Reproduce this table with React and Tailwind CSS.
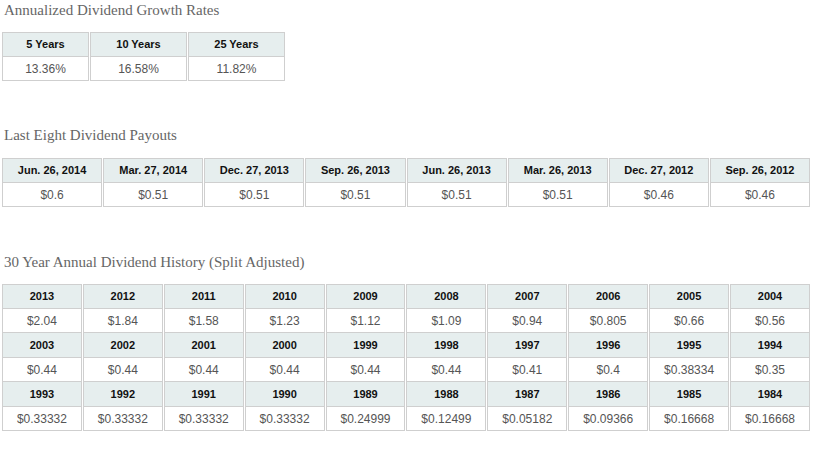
import React from "react";

const growth = [["5 Years", "13.36%"], ["10 Years", "16.58%"], ["25 Years", "11.82%"]];
const payouts = [
  ["Jun. 26, 2014", "$0.6"],
  ["Mar. 27, 2014", "$0.51"],
  ["Dec. 27, 2013", "$0.51"],
  ["Sep. 26, 2013", "$0.51"],
  ["Jun. 26, 2013", "$0.51"],
  ["Mar. 26, 2013", "$0.51"],
  ["Dec. 27, 2012", "$0.46"],
  ["Sep. 26, 2012", "$0.46"],
];
const history = [
  [
    ["2013", "$2.04"], ["2012", "$1.84"], ["2011", "$1.58"], ["2010", "$1.23"], ["2009", "$1.12"],
    ["2008", "$1.09"], ["2007", "$0.94"], ["2006", "$0.805"], ["2005", "$0.66"], ["2004", "$0.56"],
  ],
  [
    ["2003", "$0.44"], ["2002", "$0.44"], ["2001", "$0.44"], ["2000", "$0.44"], ["1999", "$0.44"],
    ["1998", "$0.44"], ["1997", "$0.41"], ["1996", "$0.4"], ["1995", "$0.38334"], ["1994", "$0.35"],
  ],
  [
    ["1993", "$0.33332"], ["1992", "$0.33332"], ["1991", "$0.33332"], ["1990", "$0.33332"], ["1989", "$0.24999"],
    ["1988", "$0.12499"], ["1987", "$0.05182"], ["1986", "$0.09366"], ["1985", "$0.16668"], ["1984", "$0.16668"],
  ],
];

function Heading({ children, className = "" }) {
  return (
    <h2
      className={`text-[15px] leading-[20px] font-normal text-[#666] pl-[4px] ${className}`}
      style={{ fontFamily: '"Liberation Serif", Georgia, serif' }}
    >
      {children}
    </h2>
  );
}

function Rows({ groups, colClasses }) {
  return (
    <tbody>
      {groups.map((g, gi) => (
        <React.Fragment key={gi}>
          <tr>
            {g.map(([h], i) => (
              <th
                key={i}
                className={`h-[25px] p-0 text-center text-[11px] font-bold text-[#111] bg-[#e6eeee] border border-[#cfcfcf] ${gi > 0 ? "border-t-0 h-[24px]" : ""} ${gi === 0 && colClasses ? colClasses[i] : ""}`}
              >
                {h}
              </th>
            ))}
          </tr>
          <tr>
            {g.map(([, v], i) => (
              <td
                key={i}
                className="h-[24px] p-0 text-center text-[12px] text-[#555] bg-white border border-t-0 border-[#cfcfcf]"
              >
                {v}
              </td>
            ))}
          </tr>
        </React.Fragment>
      ))}
    </tbody>
  );
}

function Table({ groups, width, className = "", colClasses }) {
  return (
    <table
      className={`table-fixed border-separate border-spacing-x-px border-spacing-y-0 ml-px ${width} ${className}`}
      style={{ fontFamily: '"Liberation Sans", Arial, sans-serif' }}
    >
      <Rows groups={groups} colClasses={colClasses} />
    </table>
  );
}

export default function App() {
  return (
    <div className="w-[836px] h-[456px] bg-white overflow-hidden">
      <Heading>Annualized Dividend Growth Rates</Heading>
      <Table
        groups={[growth]}
        width="w-[285px]"
        className="mt-[12px]"
        colClasses={["w-[87px]", "w-[97px]", "w-[97px]"]}
      />
      <Heading className="mt-[44px]">Last Eight Dividend Payouts</Heading>
      <Table groups={[payouts]} width="w-[810px]" className="mt-[13px]" />
      <Heading className="mt-[45px]">30 Year Annual Dividend History (Split Adjusted)</Heading>
      <Table groups={history} width="w-[810px]" className="mt-[12px]" />
    </div>
  );
}
